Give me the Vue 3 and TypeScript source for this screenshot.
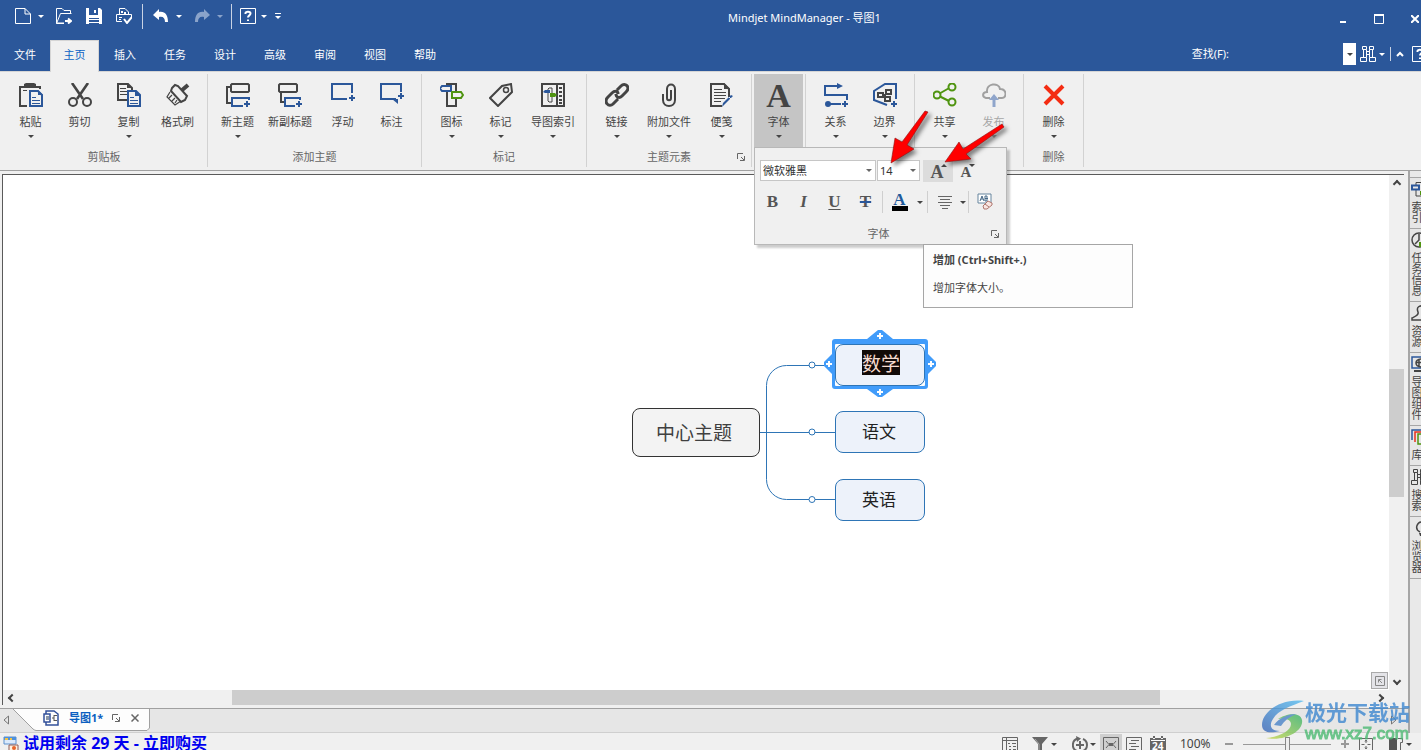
<script setup lang="ts">
import { h, ref } from 'vue'

type Shape = [d: string, color: string, stroke?: number, fill?: string]
interface Icon { w: number; h: number; shapes: Shape[] }

const K = '#444444'
const B = '#2b579a'
const G = '#4f9410'
const W = '#ffffff'
const D = '#666666'

const circle = (x: number, y: number, r: number) =>
  `M${x - r} ${y}a${r} ${r} 0 1 0 ${2 * r} 0a${r} ${r} 0 1 0 ${-2 * r} 0Z`

const big = (...shapes: Shape[]): Icon => ({ w: 24, h: 24, shapes })
const small = (...shapes: Shape[]): Icon => ({ w: 16, h: 16, shapes })

const newDoc = 'M.5 .5H10L15.500 6V15.500H.5ZM10 .5V6H15.500'
const questionMark = 'M5.5 6V5C5.5 3.4 10.5 3.2 10.5 5.6C10.5 7.4 8 7.4 8 9.6M8 11.4V13'
const binoculars = 'M2.500 .5H6.500V3.500H2.500ZM9.500 .5H13.500V3.500H9.500ZM3.500 3.500V11.500M6.500 3.500V11.500M9.500 3.500V11.500M12.500 3.500V11.500M.5 11.500H6.500V15.500H.5ZM9.500 11.500H15.500V15.500H9.500ZM6.500 5.500H9.500M6.500 8.500H9.500'

const icons: Record<string, Icon> = {
  newDoc: small([newDoc, W, 1]),
  open: small(['M.5 15.500V.5H6L8 2.500H14.500V5.500M.5 15.500L4.500 5.500H15.500', W, 1], ['M.5 15.500H8M9 13H14M12 10.5L15 13L12 15.5', W, 2]),
  save: small(['M0 0H14L16 2V16H0ZM3 0V7H12V0ZM3 10V16H13V10Z', W], ['M8 2H10V5H8ZM3 11H13V12H3ZM3 14H13V15H3Z', W]),
  print: small(['M3.500 6.500V.5H9L12.500 4V6.500M.5 6.500H15.500V10M.5 6.500V13.500H6M3 9.500H6M3 11.500H5', W, 1], ['M6 3V5M9 4V6M8 11L11 15L16 9', W, 2]),
  undo: small(['M0 7L6 1V4C12 3 15 7 15 14H12C12 10 10 8 6 9V12Z', W]),
  redo: small(['M16 7L10 1V4C4 3 1 7 1 14H4C4 10 6 8 10 9V12Z', '#8aa3ca']),
  help: small(['M.5 .5H15.5V15.5H.5Z', W, 1], [questionMark, W, 2]),
  binoculars: small([binoculars, W, 1]),
  min: { w: 10, h: 10, shapes: [['M2 8H8', W, 2]] },
  max: { w: 10, h: 10, shapes: [['M.5 1H9.500V9.500H.5Z', W, 1], ['M0 1H10', W, 2]] },
  close: { w: 8, h: 8, shapes: [['M0 0L8 8M8 0L0 8', W, 2]] },
  caret: { w: 8, h: 6, shapes: [['M1 5L4 2L7 5', W, 2]] },

  paste: big(['M8 23H1V4H21V6', K, 2], ['M5 5V1L7 0H15L17 1V5ZM4 7H8V8H4Z', K],
    ['M11 8H19L23 12V23H11Z', B, 2, '#f0f0f0'], ['M19 7L24 12H19Z', B], ['M13 14.500H17M13 17.500H21M13 20.500H21', B, 1]),
  cut: big(['M4 0L15 16M20 0L9 16', K, 2.6], [circle(5, 19, 4) + circle(19, 19, 4), K, 2]),
  copy: big(['M1 1H11L15 5V17H1Z', K, 2, '#f0f0f0'], ['M10 0L15 5H10Z', K], ['M3 5.500H9M3 8.500H11M3 11.500H11', K, 1],
    ['M11 8H19L23 12V23H11Z', B, 2, '#f0f0f0'], ['M18 7L24 13H18Z', B], ['M13 14.500H17M13 17.500H21M13 20.500H21', B, 1]),
  brush: big(['M22 2L15 8', K, 4], ['M6 5L9 2L12 3L21 13L19 17L15 19L5 8Z', K, 2, '#f0f0f0'],
    ['M4 9L1 14L9 22L15 18M3 15L6 12M6 18L9 15M9 20L11 17', K, 1.2]),
  topic: big(['M6 1H22L23 2V8L22 9H6L5 8V2ZM5 4H1V20H5', K, 2], ['M23 17V15H6V23H17M18 21H24M21 18V24', B, 2]),
  subtopic: big(['M2 1H18L19 2V8L18 9H2L1 8V2ZM3 9V19H7', K, 2], ['M22 17V15H7V23H17M18 21H24M21 18V24', B, 2]),
  floating: big(['M16 16H1V1H21V10M18 15H24M21 12V18', B, 2]),
  callout: big(['M16 16H1V1H21V9M18 13H24M21 10V16', B, 2], ['M12 16H18V21Z', B]),
  marker: big(['M7 1H16V23H7Z', K, 2], ['M2 3H11V8H2L0 5.5Z', B, 2, '#f0f0f0'], ['M12 9H21L23 12L21 15H12Z', G, 2, '#f0f0f0']),
  tag: big(['M1 15L13 3L22 1L23 9L9 23Z', K, 2], [circle(17, 7, 2.5), K, 1.5]),
  index: big(['M1 1H23V23H1ZM16 1V23', K, 2], ['M8 5H11V19H8L7 18V6Z', K, 1], ['M18 5H21M18 9H21M18 13H21M18 17H21M18 20H21', K, 2],
    ['M2 9L4 7H9V10H4Z', B], ['M9 10H14L16 12L14 14H9Z', G]),
  link: big(['M12 7L16 3C20 -1 26 4 21 9L17 13C14 16 11 14 11 11M13 11C13 8 10 7 7 10L3 14C-2 19 4 25 8 21L13 16', K, 3]),
  clip: big(['M14 7V15C14 18 10 18 10 15V6C10 0 18 0 18 6V17C18 25 6 25 6 17V11', K, 2]),
  note: big(['M19 14V6L14 1H1V23H12', K, 2], ['M14 0L20 6H14Z', K], ['M4 6.500H12M4 9.500H16M4 12.500H16M4 15.500H15M4 18.500H11', K, 1],
    ['M23 13L14 22L12 24L13 20L21 12Z', B], ['M19 14L22 17', '#f0f0f0', 1]),
  relation: big(['M15 3H1V12H23V17M4 21H17M18 21H24M21 18V24', B, 2], ['M13 0L19 3L13 6Z' + circle(4, 21, 3), B]),
  boundary: big(['M14 22L1 17V8L12 1H23V16M18 21H24M21 18V24', B, 2],
    ['M5 10H10V14H5ZM13 7H18V11H13ZM12 14H17V18H12ZM10 12H13', K, 2]),
  share: big(['M4 12L18 4M4 12L18 19', G, 2], [circle(4, 12, 3.5) + circle(19, 4, 3.5) + circle(19, 19, 3.5), G, 2, '#f0f0f0']),
  publish: big(['M8 15H4C0 14 0 9 5 9C4 0 17 -1 18 6C25 6 25 15 20 15H16', '#a0a0a0', 2], ['M12 11L17 17H13.5V24H10.5V17H7Z', '#8fa5cb']),
  remove: big(['M3 3L21 21M21 3L3 21', '#f42c12', 4]),

  launcher: { w: 8, h: 8, shapes: [['M0.5 6V.5H6M4 4L7 7M7.5 3V7.5H3', D, 1]] },
  align: small(['M1 2.5H15M3 5.5H13M1 8.5H15M3 11.5H13M5 14.5H11', D, 1]),
  clear: { w: 18, h: 18, shapes: [['M1 1H14V10H1Z', '#67859e', 1, W], ['M3 8L5 3L7 8M4 6H6M8 3V8M8 3H10V8H8M8 5.5H11', '#456887', 1],
    ['M6 13L11 8L15 10V12L10 16H7Z', '#b0776f', 1, '#f8e6e2'], ['M8 11L12 14', '#b0776f', 1]] },

  mapDoc: small(['M1 4H3V1H11L15 4V15H3V12M1 4V12H7V4Z', '#32509b', 1.5], ['M3 6H6V10H3Z', '#8a97a8'], ['M9 8H11M11 5V11M11 5.5H14M11 10.5H14', '#555', 1]),
  closeTab: { w: 8, h: 8, shapes: [['M.5 .5L7.5 7.5M7.5 .5L.5 7.5', '#666', 1.5]] },
  trial: small(['M1 1H13V8H1Z', '#5c91cd', 1, '#dbeafc'], ['M1 1H13V4H1Z', '#4f91dc'], ['M2 3H5M7 3H9', '#f5c342', 2],
    ['M6 9H15V15H6Z', '#8d5c58', 1, '#fff1df'], [circle(11, 12, 2), '#e8652a']),
  outline: small(['M.5 1.5H15.5V15.5H.5ZM4.500 1V16M1 4.5H15M6 7.5H8M10 7.5H14M7 10.5H9M11 10.5H14M7 13.5H9M11 13.5H14', D, 1]),
  filter: small(['M0 1H16L10 8V16H6V8Z', D], ['M3 3L7 8V15', '#aaa', 1]),
  rotate: small(['M6 2.600A6.500 6.500 0 0 0 5 15M11 3A6.500 6.500 0 0 1 11 15M8 5V13M4 9H12', D, 2], ['M4 0L9 2.500L5 6Z', D]),
  mapView: small(['M.5 1.5H15.5V15.5H.5Z', D, 1], ['M3 5L6 8.500H10L13 5M3 12L6 8.500M13 12L10 8.500', D, 1], ['M6 7H10V10H6Z', D]),
  list: small(['M.5 1.5H15.5V15.5H.5ZM5 4.5H13M3 7.5H10M5 10.5H13M3 13.5H10', D, 1]),
  calendar: small(['M0 2H16V16H0ZM3 0H5V3H3ZM11 0H13V3H11Z', D], ['M1 4.500H15', W, 1]),
  fit: { w: 14, h: 14, shapes: [['M.5 1.5H13.5V13.5H.5Z', D, 1], ['M7 3V6M7 9V12M2.500 7.500H5.500M8.500 7.500H11.500M6 4.500L7 3L8 4.500M6 10.500L7 12L8 10.500', D, 1]] },
  panel: { w: 14, h: 14, shapes: [['M0 1H8V14H0Z', '#555'], ['M9 1.500H13.500V5.500H11.500V14', D, 1]] },
  navigator: { w: 10, h: 10, shapes: [['M.5 .5H9.500V9.500H.5ZM3.500 6.500V3.500H6.500M4 4L7 7', '#888', 1]] },

  sideIndex: small(['M5 1.500H13V15H5Z', K, 1], ['M1 4.500H8V8.500H1Z', B, 2, '#e6e6e6'], ['M9 10H15V14H9Z', G]),
  sideTask: small([circle(8, 8, 7), K, 1.5], ['M8 2V8L4 12', K, 1.5], ['M8 10H16V15H8Z', G]),
  sideResource: small(['M15 1C8 0 5 2 7 7C8 10 5 11 1 13V15H15', K, 1.5]),
  sideParts: small(['M1 1H15V12H1Z', B, 1.500], ['M12 3C7 3 5 5 5 7S7 11 12 11M5 6.500H12M8 3.500V10.500', K, 1.500], ['M3 15H14', K, 2]),
  sideLibrary: small(['M1 11V1H12', B, 1.5], ['M4 13V3H15', '#e6311b', 1.500], ['M7 5H15V15H7Z', G, 1.500]),
  sideSearch: small([binoculars, K, 1]),
  sideBrowser: small(['M9 12C3 9 6 1 12 2C17 3 17 9 13 12', K, 1.5], ['M8 13H15V16H9Z', K]),
}

const Glyph = (props: { name: string }) => {
  const icon = icons[props.name]
  return h('svg', { class: 'glyph', width: icon.w, height: icon.h, viewBox: `0 0 ${icon.w} ${icon.h}`, 'aria-hidden': 'true' },
    icon.shapes.map(([d, color, stroke, fill]) => h('path', stroke
      ? { d, stroke: color, 'stroke-width': stroke, fill: fill ?? 'none' }
      : { d, fill: color, 'fill-rule': 'evenodd' })))
}
Glyph.props = ['name']

const tabs = ['文件', '主页', '插入', '任务', '设计', '高级', '审阅', '视图', '帮助']

interface Tool { label: string; icon: string; drop?: boolean; wide?: boolean; disabled?: boolean }
interface Group { name: string; tools: Tool[]; launcher?: boolean; font?: boolean }
const groups: Group[] = [
  { name: '剪贴板', tools: [
    { label: '粘贴', icon: 'paste', drop: true }, { label: '剪切', icon: 'cut' },
    { label: '复制', icon: 'copy', drop: true }, { label: '格式刷', icon: 'brush' }] },
  { name: '添加主题', tools: [
    { label: '新主题', icon: 'topic', drop: true }, { label: '新副标题', icon: 'subtopic', wide: true },
    { label: '浮动', icon: 'floating' }, { label: '标注', icon: 'callout' }] },
  { name: '标记', tools: [
    { label: '图标', icon: 'marker', drop: true }, { label: '标记', icon: 'tag', drop: true },
    { label: '导图索引', icon: 'index', drop: true, wide: true }] },
  { name: '主题元素', launcher: true, tools: [
    { label: '链接', icon: 'link', drop: true }, { label: '附加文件', icon: 'clip', drop: true, wide: true },
    { label: '便笺', icon: 'note', drop: true }] },
  { name: '', font: true, tools: [{ label: '字体', icon: '', drop: true }] },
  { name: '', tools: [{ label: '关系', icon: 'relation', drop: true }, { label: '边界', icon: 'boundary', drop: true }] },
  { name: '', tools: [{ label: '共享', icon: 'share', drop: true }, { label: '发布', icon: 'publish', drop: true, disabled: true }] },
  { name: '删除', tools: [{ label: '删除', icon: 'remove', drop: true }] },
]

const sideTabs = [
  { label: '索引', icon: 'sideIndex' }, { label: '任务信息', icon: 'sideTask' },
  { label: '资源', icon: 'sideResource' }, { label: '导图组件', icon: 'sideParts' },
  { label: '库', icon: 'sideLibrary' }, { label: '搜索', icon: 'sideSearch' },
  { label: '浏览器', icon: 'sideBrowser' },
]

const family = ref('微软雅黑')
const size = ref('14')
const query = ref('')
const zoom = ref(50)
</script>

<template>
  <div class="app">
    <header class="titlebar">
      <div class="quick">
        <button class="qbtn" aria-label="新建"><Glyph name="newDoc" /></button>
        <button class="qdrop" aria-label="新建选项"><i class="tri white"></i></button>
        <button class="qbtn" aria-label="打开"><Glyph name="open" /></button>
        <button class="qbtn" aria-label="保存"><Glyph name="save" /></button>
        <button class="qbtn" aria-label="打印"><Glyph name="print" /></button>
        <span class="qsep"></span>
        <button class="qbtn" aria-label="撤消"><Glyph name="undo" /></button>
        <button class="qdrop" aria-label="撤消列表"><i class="tri white"></i></button>
        <button class="qbtn" aria-label="恢复"><Glyph name="redo" /></button>
        <button class="qdrop" aria-label="恢复列表"><i class="tri faded"></i></button>
        <span class="qsep"></span>
        <button class="qbtn narrow" aria-label="帮助"><Glyph name="help" /></button>
        <button class="qdrop" aria-label="帮助选项"><i class="tri white"></i></button>
        <button class="qmore" aria-label="自定义"><i class="bar"></i><i class="tri white"></i></button>
      </div>
      <div class="title">Mindjet MindManager - 导图1</div>
      <div class="winctl">
        <button aria-label="最小化"><Glyph name="min" /></button>
        <button aria-label="最大化"><Glyph name="max" /></button>
        <button class="last" aria-label="关闭"><Glyph name="close" /></button>
      </div>
    </header>

    <nav class="tabs">
      <button v-for="t in tabs" :key="t" class="tab" :class="{ active: t === '主页' }">{{ t }}</button>
      <div class="find">
        <label for="find">查找(F):</label>
        <input id="find" v-model="query" type="text" />
        <button class="finddrop" aria-label="查找记录"><i class="tri"></i></button>
        <button class="findgo" aria-label="查找"><Glyph name="binoculars" /></button>
        <button class="qdrop" aria-label="查找选项"><i class="tri white"></i></button>
        <span class="fsep"></span>
        <button class="collapse" aria-label="折叠功能区"><Glyph name="caret" /></button>
        <button class="fhelp" aria-label="帮助"><Glyph name="help" /></button>
      </div>
    </nav>

    <section class="ribbon">
      <div v-for="(g, i) in groups" :key="i" class="group" :class="{ fontgroup: g.font }">
        <div class="tools">
          <button v-for="t in g.tools" :key="t.label" class="tool" :class="{ wide: t.wide, pressed: g.font }" :disabled="t.disabled">
            <span class="pic"><b v-if="g.font">A</b><Glyph v-else :name="t.icon" /></span>
            <span class="lbl">{{ t.label }}</span>
            <i v-if="t.drop" class="tri"></i>
          </button>
        </div>
        <div class="gname">{{ g.name }}</div>
        <button v-if="g.launcher" class="launcher" aria-label="主题元素选项"><Glyph name="launcher" /></button>

        <div v-if="g.font" class="popup">
          <div class="prow">
            <span class="combo family">
              <select v-model="family" aria-label="字体"><option>微软雅黑</option><option>宋体</option></select>
              <i class="tri"></i>
            </span>
            <span class="combo size">
              <select v-model="size" aria-label="字号"><option>12</option><option>14</option><option>16</option></select>
              <i class="tri"></i>
            </span>
            <button class="step hover" aria-label="增加"><b>A</b><i class="tri up"></i></button>
            <button class="step less" aria-label="减小"><b>A</b><i class="tri"></i></button>
          </div>
          <div class="prow marks">
            <button class="mk" aria-label="粗体"><b>B</b></button>
            <button class="mk" aria-label="斜体"><b class="it">I</b></button>
            <button class="mk" aria-label="下划线"><b class="un">U</b></button>
            <button class="mk strike" aria-label="删除线"><b>T</b></button>
            <span class="psep"></span>
            <button class="mk color" aria-label="字体颜色"><b>A</b></button>
            <button class="pdrop" aria-label="颜色选项"><i class="tri"></i></button>
            <span class="psep"></span>
            <button class="mk" aria-label="对齐"><Glyph name="align" /></button>
            <button class="pdrop al" aria-label="对齐选项"><i class="tri"></i></button>
            <span class="psep"></span>
            <button class="mk" aria-label="清除格式"><Glyph name="clear" /></button>
          </div>
          <div class="gname">字体</div>
          <button class="launcher" aria-label="字体选项"><Glyph name="launcher" /></button>
          <div class="tip" role="tooltip">
            <strong>增加 (Ctrl+Shift+.)</strong>
            <span>增加字体大小。</span>
          </div>
          <svg class="pointers" width="260" height="80" viewBox="750 100 260 80" aria-hidden="true">
            <g fill="#ff0000" stroke="#8c1010" stroke-width="0.6">
              <path d="M925 111L928 112L907 145L914 149L891 163L895 138L902 142Z" />
              <path d="M1002 124L1004 127L966 154L971 159L945 162L959 142L963 149Z" />
            </g>
          </svg>
        </div>
      </div>
    </section>

    <main class="work">
      <div class="left">
        <div class="frame">
          <div class="viewrow">
            <div class="canvas">
              <svg class="wires" width="960" height="400" viewBox="0 0 960 400" aria-hidden="true">
                <g fill="none" stroke="#2e75b6" stroke-width="1">
                  <path d="M757 257.500H833M809 190.500H783.500A20 20 0 0 0 763.500 210.500V304.500A20 20 0 0 0 783.500 324.500H833M809 190.500H833" />
                  <g fill="#ffffff">
                    <circle cx="809" cy="190" r="3" /><circle cx="809" cy="257" r="3" /><circle cx="809" cy="324.500" r="3" />
                  </g>
                </g>
              </svg>
              <div class="node root">中心主题</div>
              <div class="halo">
                <svg width="112" height="68" viewBox="0 0 112 68" aria-hidden="true">
                  <path fill="#419cfa" fill-rule="evenodd" d="M11 9H43L54 0H58L69 9H101Q104 9 104 12V24L112 32V36L104 44V56Q104 59 101 59H69L58 67H54L43 59H11Q8 59 8 56V44L0 36V32L8 24V12Q8 9 11 9ZM12 14Q11 14 11 15V55Q11 56 12 56H100Q101 56 101 55V15Q101 14 100 14Z" />
                  <path stroke="#ffffff" stroke-width="2" d="M53 6H59M56 3V9M53 62H59M56 59V65M2 34H8M5 31V37M104 34H110M107 31V37" />
                </svg>
              </div>
              <div class="node first"><span class="selected">数学</span></div>
              <div class="node second">语文</div>
              <div class="node third">英语</div>
              <button class="nav" aria-label="导航"><Glyph name="navigator" /></button>
            </div>
            <div class="vbar">
              <button aria-label="向上"><i class="chev up"></i></button>
              <span class="gap1"></span><span class="thumb"></span><span class="gap2"></span>
              <button aria-label="向下"><i class="chev down"></i></button>
            </div>
          </div>
          <div class="hbar">
            <button aria-label="向左"><i class="chev back"></i></button>
            <span class="gap1"></span><span class="thumb"></span><span class="gap2"></span>
            <button aria-label="向右"><i class="chev fwd"></i></button>
          </div>
        </div>
        <div class="docs">
          <button class="shift" aria-label="上一个"><svg width="6" height="10" viewBox="0 0 6 10"><path d="M5.500 1V9L1 5Z" fill="none" stroke="#777" /></svg></button>
          <div class="doctab">
            <svg class="shape" width="138" height="22" viewBox="0 0 138 22" aria-hidden="true"><path d="M0 -1L21 20Q22 21 24 21.500H135L137.500 19V-1" fill="#fdfdfd" stroke="#a0a0a0" /></svg>
            <Glyph name="mapDoc" />
            <span class="docname">导图1*</span>
            <button aria-label="窗口选项"><Glyph name="launcher" /></button>
            <button aria-label="关闭"><Glyph name="closeTab" /></button>
          </div>
          <button class="shift end" aria-label="下一个"><svg width="6" height="10" viewBox="0 0 6 10"><path d="M.5 1V9L5 5Z" fill="none" stroke="#777" /></svg></button>
        </div>
      </div>
      <aside class="dock">
        <button v-for="s in sideTabs" :key="s.label" class="side"><Glyph :name="s.icon" /><span>{{ s.label }}</span></button>
      </aside>
    </main>

    <footer class="status">
      <Glyph name="trial" />
      <a href="#buy">试用剩余 29 天 - 立即购买</a>
      <div class="views">
        <button aria-label="大纲"><Glyph name="outline" /></button>
        <button aria-label="筛选"><Glyph name="filter" /></button>
        <i class="tri"></i>
        <button class="sp" aria-label="旋转"><Glyph name="rotate" /></button>
        <i class="tri"></i>
        <button class="on" aria-label="导图视图"><Glyph name="mapView" /></button>
        <button class="tight" aria-label="大纲视图"><Glyph name="list" /></button>
        <button class="cal" aria-label="日程视图"><Glyph name="calendar" /><b>24</b></button>
        <span class="pct">100%</span>
        <button class="pm" aria-label="缩小"><i class="dash"></i></button>
        <input v-model="zoom" type="range" min="0" max="100" aria-label="缩放" />
        <button class="pm" aria-label="放大"><i class="dash plus"></i></button>
        <button class="fit" aria-label="适合窗口"><Glyph name="fit" /></button>
        <button class="pane" aria-label="任务窗格"><Glyph name="panel" /></button>
        <i class="tri"></i>
      </div>
    </footer>

    <div class="mark">
      <svg width="44" height="42" viewBox="0 0 44 42" aria-hidden="true">
        <defs>
          <linearGradient id="sky" x1="0" y1="1" x2="1" y2="0"><stop offset="0" stop-color="#3d68b8" /><stop offset="1" stop-color="#56bdf0" /></linearGradient>
          <linearGradient id="leaf" x1="0" y1="1" x2="1" y2="0"><stop offset="0" stop-color="#c9d64a" /><stop offset="1" stop-color="#37b36b" /></linearGradient>
        </defs>
        <path fill="url(#sky)" d="M43 1C20 -2 1 12 1 25C1 32 8 34 19 31C9 31 8 25 12 19C17 10 30 6 43 1Z" />
        <path fill="url(#leaf)" d="M17 19C24 14 39 11 41 20C43 31 24 42 5 38C18 37 30 31 30 24C30 19 24 18 17 19Z" />
        <path fill="#4a84c9" d="M13 25C18 18 27 14 35 14C28 17 23 21 20 26Z" />
      </svg>
      <div class="words"><span>极光下载站</span><span class="url">www.xz7.com</span></div>
    </div>
  </div>
</template>

<style>
html, body { margin: 0; overflow: hidden; }
</style>

<style scoped>
.app {
  position: relative;
  display: flex;
  flex-direction: column;
  height: 100vh;
  overflow: hidden;
  background: #f0f0f0;
  color: #444;
  font: 11px/16px "Noto Sans", "Noto Sans CJK SC", sans-serif;
}
.app *, .app *::before { box-sizing: border-box; }
button { display: flex; align-items: center; justify-content: center; margin: 0; padding: 0; border: 0; background: none; color: inherit; font: inherit; }
.glyph { display: block; flex: none; }
.tri { display: block; flex: none; width: 0; height: 0; border: 3px solid transparent; border-top-color: #444; border-bottom: 0; }
.tri.white { border-top-color: #fff; }
.tri.faded { border-top-color: #8aa3ca; }
.tri.up { transform: rotate(180deg); }

.titlebar { display: flex; flex: none; height: 40px; background: #2b579a; color: #fff; }
.quick { display: flex; align-items: center; height: 32px; padding-left: 8px; }
.qbtn { width: 30px; height: 30px; }
.qbtn.narrow { width: 26px; }
.qdrop { width: 6px; height: 24px; margin-right: 5px; }
.qsep { width: 1px; height: 25px; margin: 0 3px; background: #c9d3e4; }
.qmore { flex-direction: column; gap: 2px; width: 12px; height: 24px; }
.bar { width: 6px; height: 1px; background: #fff; }
.title { flex: 1; padding-top: 10px; text-align: center; }
.winctl { display: flex; padding-top: 13px; height: 24px; }
.winctl button { width: 36px; height: 12px; }
.winctl .last { width: 24px; padding-right: 2px; justify-content: flex-end; }

.tabs { display: flex; flex: none; height: 32px; border-bottom: 1px solid #d5d5d5; background: #2b579a; color: #fff; }
.tab { width: 50px; height: 32px; padding-bottom: 2px; }
.tab.active { width: 49px; margin-right: 1px; padding-bottom: 4px; border: 1px solid #d5d5d5; border-bottom: 0; background: #f0f0f0; color: #0a62c4; }
.find { display: flex; align-items: center; height: 28px; margin-left: auto; }
.find input { width: 110px; height: 22px; margin-left: 4px; border: 0; outline: 0; background: transparent; color: #fff; font: inherit; }
.finddrop { width: 13px; height: 22px; background: #fff; }
.findgo { width: 16px; margin: 0 3px 0 4px; }
.find .qdrop { margin-right: 5px; }
.fsep { width: 1px; height: 14px; background: #c9d3e4; }
.collapse { width: 8px; margin: 0 8px 0 5px; }
.fhelp { width: 9px; overflow: hidden; justify-content: flex-start; }

.ribbon { display: flex; flex: none; height: 99px; padding: 2px 0 0 1px; border-bottom: 1px solid #a0a0a0; }
.group { position: relative; height: 93px; padding: 0 5px; border-right: 1px solid #d2d2d2; }
.tools { display: flex; height: 75px; }
.tool { flex-direction: column; justify-content: flex-start; width: 49px; height: 73px; padding-top: 9px; }
.tool.wide { width: 56px; }
.tool .lbl { margin-top: 7px; white-space: nowrap; }
.tool .tri { margin-top: 5px; }
.tool.pressed { background: #c5c5c5; }
.tool:disabled { color: #a6a6a6; }
.tool:disabled .tri { border-top-color: #a6a6a6; }
.pic { display: block; height: 24px; }
.pic b { font: bold 34px/26px "Liberation Serif", serif; }
.gname { color: #666; text-align: center; }
.launcher { position: absolute; right: 6px; bottom: 6px; width: 8px; height: 8px; }
.fontgroup { z-index: 5; padding: 0 2px; }

.popup { position: absolute; top: 73px; left: 2px; width: 253px; height: 98px; padding: 12px 5px 0; border: 1px solid #b8b8b8; background: #f0f0f0; box-shadow: 3px 3px 2px rgba(0, 0, 0, .2); }
.prow { display: flex; height: 22px; }
.combo { position: relative; height: 21px; }
.combo select { width: 100%; height: 100%; padding: 0 2px; border: 1px solid #c6c6c6; border-radius: 0; outline: 0; background: #fff; color: #333; font: inherit; appearance: none; }
.combo .tri { position: absolute; top: 9px; right: 4px; border-top-color: #666; }
.family { width: 116px; margin-right: 1px; }
.size { width: 43px; margin-right: 3px; }
.step { position: relative; width: 30px; height: 22px; padding: 2px 2px 0 0; }
.step.hover { background: #dcdcdc; }
.step b { font: bold 18px/20px "Liberation Serif", serif; color: #555; }
.step.less { padding-right: 4px; }
.step.less b { font-size: 15px; }
.step .tri { position: absolute; top: 4px; right: 6px; }
.step.less .tri { right: 8px; }
.marks { margin: 9px -3px 0; align-items: center; }
.mk { width: 31px; height: 22px; }
.mk b { font: bold 17px/20px "Liberation Serif", serif; color: #555; }
.mk b.it { font-style: italic; }
.mk b.un { text-decoration: underline; text-underline-offset: 2px; text-decoration-thickness: 1px; }
.strike b { text-decoration: line-through #2b579a 2px; }
.psep { width: 1px; height: 22px; margin: 0 1px; background: #cfcfcf; }
.mk.color { width: 29px; margin-left: 1px; }
.color b { width: 16px; height: 17px; border-bottom: 5px solid #000; color: #1f5a9b; line-height: 11px; }
.pdrop { width: 12px; height: 22px; }
.pdrop.al { width: 6px; margin-right: 1px; }
.popup > .gname { margin-top: 13px; padding-right: 4px; }
.popup > .launcher { right: 7px; bottom: 6px; }
.tip { position: absolute; top: 96px; left: 168px; display: flex; flex-direction: column; gap: 12px; width: 210px; height: 64px; padding: 7px 9px; border: 1px solid #a6a6a6; background: #fdfdfd; }
.pointers { position: absolute; top: -48px; left: -5px; filter: drop-shadow(3px 3px 2px rgba(0, 0, 0, .5)); pointer-events: none; }

.work { display: flex; flex: 1; min-height: 0; }
.left { display: flex; flex: 1; flex-direction: column; min-width: 0; border-right: 2px solid #a6a6a6; }
.frame { display: flex; flex: 1; flex-direction: column; min-height: 0; margin: 3px 4px 3px 2px; border: solid #5a5a5a; border-width: 1px 0 0 1px; }
.viewrow { display: flex; flex: 1; min-height: 0; }
.canvas { position: relative; flex: 1; overflow: hidden; background: #fff; }
.vbar { display: flex; flex-direction: column; width: 15px; background: #f0f0f0; }
.hbar { display: flex; height: 15px; padding-right: 16px; background: #f0f0f0; }
.vbar button { height: 18px; flex: none; }
.hbar button { width: 17px; flex: none; }
.thumb { background: #cdcdcd; }
.vbar .gap1 { flex: 176; } .vbar .thumb { flex: 127; } .vbar .gap2 { flex: 175; }
.hbar .gap1 { flex: 212; } .hbar .thumb { flex: 928; } .hbar .gap2 { flex: 211; }
.chev { width: 6px; height: 6px; border: solid #444; border-width: 2px 0 0 2px; }
.chev.up { transform: rotate(45deg); }
.chev.down { transform: rotate(225deg); }
.chev.back { transform: rotate(-45deg); }
.chev.fwd { transform: rotate(135deg); }

.wires { position: absolute; top: 0; left: 0; }
.node { position: absolute; display: flex; align-items: center; left: 832px; width: 90px; height: 42px; padding: 0 0 3px 26px; border: 1px solid #2e75b6; border-radius: 8px; background: #edf2fa; color: #222; font: 17px/25px "Noto Sans CJK SC", sans-serif; }
.root { top: 233px; left: 629px; width: 128px; height: 49px; padding-left: 23px; border-color: #333; background: #f3f3f3; color: #404040; font-size: 19px; }
.first { top: 169px; padding-bottom: 5px; font-size: 19px; }
.second { top: 236px; }
.third { top: 304px; }
.selected { background: #120b08; color: #f8ddd0; }
.halo { position: absolute; top: 155px; left: 821px; width: 112px; height: 68px; }
.halo svg { display: block; }
.nav { position: absolute; right: 1px; bottom: 1px; width: 17px; height: 17px; border: 1px solid #aaa; background: #e4e4e8; }

.docs { display: flex; flex: none; height: 25px; border-top: 1px solid #a0a0a0; border-bottom: 1px solid #cfcfcf; background: #e6e6e6; }
.shift { width: 12px; height: 22px; }
.shift.end { margin-left: auto; margin-right: 8px; }
.doctab { position: relative; display: flex; align-items: center; width: 138px; height: 18px; padding-left: 31px; }
.shape { position: absolute; top: 0; left: 0; }
.doctab > *:not(.shape) { position: relative; }
.docname { width: 51px; margin-left: 10px; color: #0b5fc0; font-weight: bold; white-space: nowrap; }
.doctab button { width: 8px; margin-right: 11px; }

.dock { flex: none; width: 11px; padding-top: 6px; overflow: hidden; background: #e9e9e9; }
.side { flex-direction: column; justify-content: flex-start; align-items: flex-start; width: 24px; padding: 3px 0 5px 1px; border-top: 1px solid #a6a6a6; border-bottom: 1px solid #a6a6a6; margin-bottom: -1px; background: #e6e6e6; }
.side span { margin-top: 4px; font-size: 11px; line-height: 11px; writing-mode: vertical-rl; text-orientation: upright; }

.status { display: flex; flex: none; align-items: flex-start; height: 17px; padding: 3px 9px 0 3px; overflow: hidden; }
.status a { margin: -3px 0 0 4px; color: #0000f0; font-weight: bold; font-size: 16px; line-height: 20px; text-decoration: none; white-space: nowrap; }
.views { display: flex; align-items: center; height: 16px; margin-left: auto; }
.views button { width: 16px; height: 16px; margin-right: 14px; }
.views button:nth-child(2) { margin-right: 3px; }
.views .tri { margin-right: 15px; }
.views .sp { margin-right: 2px; }
.views .sp + .tri { margin-right: 4px; }
.views .on { width: 22px; height: 20px; margin-right: 4px; background: #cfcfcf; }
.views .tight { margin-right: 8px; }
.views .cal { position: relative; }
.cal b { position: absolute; top: 4px; left: 2px; color: #fff; font-size: 10px; line-height: 12px; }
.pct { width: 44px; font-size: 12px; }
.views .pm { width: 10px; margin-right: 9px; }
.dash { position: relative; width: 8px; height: 2px; background: #999; }
.plus::before { content: ""; position: absolute; top: -3px; left: 3px; width: 2px; height: 8px; background: #999; }
.views input { width: 88px; height: 16px; margin: 0 9px 0 0; background: none; appearance: none; }
.views input::-webkit-slider-runnable-track { height: 1px; background: #999; }
.views input::-webkit-slider-thumb { width: 5px; height: 14px; margin-top: -7px; border: 1px solid #888; background: #eee; appearance: none; }
.views .fit { width: 14px; margin-right: 16px; }
.views .pane { width: 14px; margin-right: 3px; }
.views .pane + .tri { margin-right: 0; }

.mark { position: absolute; right: 11px; bottom: 6px; display: flex; align-items: center; opacity: .8; pointer-events: none; }
.words { display: flex; flex-direction: column; color: #3e88d0; font: bold 21px/26px "Noto Sans CJK SC", sans-serif; }
.url { color: #4cba72; font: 17px/20px "Liberation Sans", sans-serif; -webkit-text-stroke: 1px #4cba72; }
</style>
